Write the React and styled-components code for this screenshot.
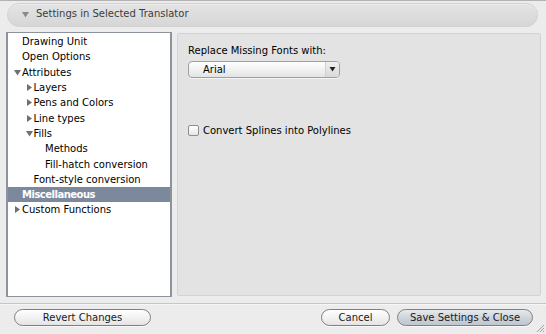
import React from "react";
import styled, { createGlobalStyle } from "styled-components";

const Global = createGlobalStyle`
  html, body { margin: 0; padding: 0; background: #ececec; }
  body { font-family: "DejaVu Sans", "Liberation Sans", sans-serif; font-size: 10px; color: #000; }
  * { box-sizing: border-box; }
`;

const Window = styled.div`
  position: relative;
  width: 546px;
  height: 334px;
  background: #ececec;
  border-top: 1px solid #b3b3b3;
  display: flex;
  flex-direction: column;
  overflow: hidden;
`;

const HeaderBar = styled.div`
  margin: 2px 8px 0 7px;
  height: 24px;
  border-radius: 12px;
  background: linear-gradient(#e4e4e4, #d6d6d6);
  border: 1px solid #d2d2d2;
  box-shadow: inset 0 1px 0 #ececec;
  display: flex;
  align-items: flex-start;
  padding: 4px 0 0 14px;
  gap: 6px;
  color: #3c3c3c;
  font-size: 10px;
  line-height: 12px;
`;

const Main = styled.div`
  display: flex;
  gap: 5px;
  padding: 0 5px 0 6px;
  margin-top: 5px;
  height: 265px;
`;

const ListBox = styled.div`
  width: 166px;
  height: 265px;
  background: #fff;
  border: 1px solid #8d939c;
  border-left-width: 2px;
  border-right-width: 2px;
  padding-top: 1px;
  display: flex;
  flex-direction: column;
`;

const Row = styled.div`
  height: 15.3px;
  display: flex;
  align-items: center;
  padding-left: ${(p) => 6 + p.$level * 11.5}px;
  background: ${(p) => (p.$selected ? "#7c889c" : "transparent")};
  color: ${(p) => (p.$selected ? "#fff" : "#000")};
  font-weight: ${(p) => (p.$selected ? "bold" : "normal")};
  letter-spacing: ${(p) => (p.$selected ? "-0.5px" : "0")};
  white-space: nowrap;
`;

const Toggle = styled.span`
  width: 8px;
  height: 8px;
  display: inline-flex;
  align-items: center;
  justify-content: flex-start;
  flex: none;
`;

const Panel = styled.div`
  flex: 1;
  margin-top: 1px;
  height: 263px;
  background: #e3e3e3;
  border: 1px solid #d3d3d3;
  border-radius: 2px;
  padding: 8px 0 0 10px;
  display: flex;
  flex-direction: column;
  align-items: flex-start;
`;

const Label = styled.div`
  height: 13px;
  line-height: 13px;
  margin-top: 2px;
`;

const Select = styled.div`
  margin-top: 4px;
  width: 152px;
  height: 17px;
  border: 1px solid #a0a0a0;
  border-radius: 4px;
  background: linear-gradient(#ffffff, #f2f2f2 50%, #e4e4e4);
  display: flex;
  align-items: center;
  box-shadow: 0 1px 0 rgba(255,255,255,0.6);
`;

const SelectText = styled.span`
  flex: 1;
  padding-left: 14px;
  line-height: 15px;
`;

const SelectArrow = styled.span`
  width: 14px;
  height: 15px;
  border-left: 1px solid #d0d0d0;
  background: linear-gradient(#f0f0f0, #d8d8d8);
  border-radius: 0 3px 3px 0;
  display: flex;
  align-items: center;
  justify-content: center;
`;

const CheckRow = styled.label`
  margin-top: 46px;
  display: flex;
  align-items: center;
  gap: 4px;
  line-height: 13px;
`;

const CheckBox = styled.span`
  width: 11px;
  height: 11px;
  border: 1px solid #8e8e8e;
  border-radius: 2px;
  background: linear-gradient(#ffffff, #e6e6e6);
  flex: none;
`;

const Separator = styled.div`
  margin-top: 6px;
  height: 2px;
  border-top: 1px solid #c6c6c6;
  border-bottom: 1px solid #f6f6f6;
`;

const Footer = styled.div`
  display: flex;
  align-items: center;
  padding: 4px 13px 0 14px;
  gap: 7px;
`;

const Spacer = styled.div`
  flex: 1;
`;

const Button = styled.button`
  width: ${(p) => p.$w}px;
  height: 17px;
  border-radius: 9px;
  border: 1px solid #7f7f7f;
  background: ${(p) =>
    p.$default
      ? "linear-gradient(#e6eaee, #cdd3da 55%, #bfc6cf)"
      : "linear-gradient(#ffffff, #f2f2f2 50%, #e4e4e4)"};
  font-family: "DejaVu Sans", "Liberation Sans", sans-serif;
  font-size: 10px;
  color: #1a1a1a;
  padding: 0;
  line-height: 15px;
  box-shadow: 0 1px 0 rgba(255,255,255,0.7);
`;

const Grip = styled.svg`
  position: absolute;
  right: 1px;
  bottom: 1px;
`;

const Tri = ({ dir = "right", color = "#707070" }) => (
  <svg width="7" height="7" viewBox="0 0 7 7">
    {dir === "right" ? (
      <polygon points="1,0 6,3.5 1,7" fill={color} />
    ) : (
      <polygon points="0,1 7,1 3.5,6.5" fill={color} />
    )}
  </svg>
);

const items = [
  { label: "Drawing Unit", level: 0 },
  { label: "Open Options", level: 0 },
  { label: "Attributes", level: 0, toggle: "down" },
  { label: "Layers", level: 1, toggle: "right" },
  { label: "Pens and Colors", level: 1, toggle: "right" },
  { label: "Line types", level: 1, toggle: "right" },
  { label: "Fills", level: 1, toggle: "down" },
  { label: "Methods", level: 2 },
  { label: "Fill-hatch conversion", level: 2 },
  { label: "Font-style conversion", level: 1 },
  { label: "Miscellaneous", level: 0, selected: true },
  { label: "Custom Functions", level: 0, toggle: "right" },
];

export default function App() {
  return (
    <>
      <Global />
      <Window>
        <HeaderBar>
          <Toggle style={{ marginTop: 2 }}>
            <Tri dir="down" color="#8a8a8a" />
          </Toggle>
          <span>Settings in Selected Translator</span>
        </HeaderBar>
        <Main>
          <ListBox>
            {items.map((it) => (
              <Row key={it.label} $level={it.level} $selected={it.selected}>
                <Toggle>{it.toggle && <Tri dir={it.toggle} />}</Toggle>
                <span>{it.label}</span>
              </Row>
            ))}
          </ListBox>
          <Panel>
            <Label>Replace Missing Fonts with:</Label>
            <Select>
              <SelectText>Arial</SelectText>
              <SelectArrow>
                <svg width="7" height="5" viewBox="0 0 7 5">
                  <polygon points="0.5,0 6.5,0 3.5,4.5" fill="#222" />
                </svg>
              </SelectArrow>
            </Select>
            <CheckRow>
              <CheckBox />
              <span>Convert Splines into Polylines</span>
            </CheckRow>
          </Panel>
        </Main>
        <Separator />
        <Footer>
          <Button $w={137}>Revert Changes</Button>
          <Spacer />
          <Button $w={69}>Cancel</Button>
          <Button $w={136} $default>
            Save Settings &amp; Close
          </Button>
        </Footer>
        <Grip width="10" height="10" viewBox="0 0 10 10">
          <line x1="9" y1="2" x2="2" y2="9" stroke="#a0a0a0" strokeWidth="1" />
          <line x1="9" y1="5" x2="5" y2="9" stroke="#a0a0a0" strokeWidth="1" />
          <line x1="9" y1="8" x2="8" y2="9" stroke="#a0a0a0" strokeWidth="1" />
        </Grip>
      </Window>
    </>
  );
}
